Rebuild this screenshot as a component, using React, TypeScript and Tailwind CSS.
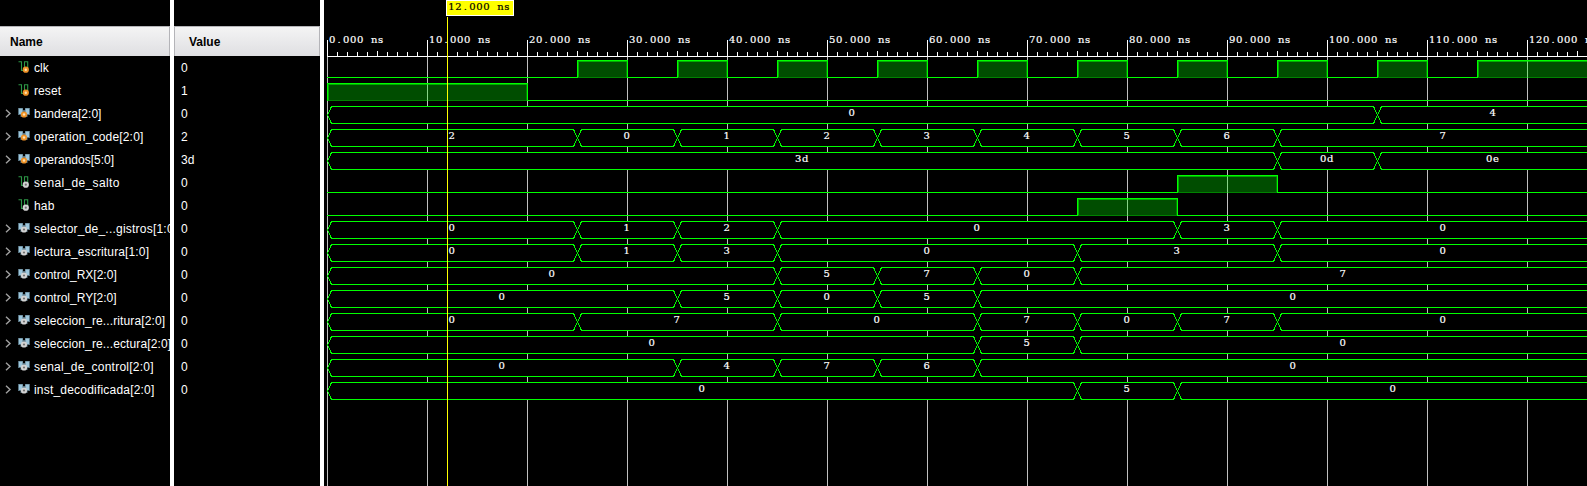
import React from "react";

type Signal = {
  name: string;
  value: string;
  tracking?: string;
  input?: boolean;
  // Scalar signals list their high intervals, buses list [end time, label] segments (ns).
  high?: [number, number][];
  bus?: [number, string][];
};

const END = 128;

const signals: Signal[] = [
  {
    name: "clk", value: "0", input: true,
    high: [[25, 30], [35, 40], [45, 50], [55, 60], [65, 70], [75, 80], [85, 90], [95, 100], [105, 110], [115, END]],
  },
  { name: "reset", value: "1", input: true, tracking: "tracking-[0.1px]", high: [[0, 20]] },
  { name: "bandera[2:0]", value: "0", input: true, bus: [[105, "0"], [END, "4"]] },
  {
    name: "operation_code[2:0]", value: "2", input: true, tracking: "tracking-[0.18px]",
    bus: [[25, "2"], [35, "0"], [45, "1"], [55, "2"], [65, "3"], [75, "4"], [85, "5"], [95, "6"], [END, "7"]],
  },
  { name: "operandos[5:0]", value: "3d", input: true, bus: [[95, "3d"], [105, "0d"], [END, "0e"]] },
  { name: "senal_de_salto", value: "0", tracking: "tracking-[0.36px]", high: [[85, 95]] },
  { name: "hab", value: "0", tracking: "tracking-[0.2px]", high: [[75, 85]] },
  {
    name: "selector_de_...gistros[1:0]", value: "0", tracking: "tracking-[0.22px]",
    bus: [[25, "0"], [35, "1"], [45, "2"], [85, "0"], [95, "3"], [END, "0"]],
  },
  {
    name: "lectura_escritura[1:0]", value: "0", tracking: "tracking-[0.14px]",
    bus: [[25, "0"], [35, "1"], [45, "3"], [75, "0"], [95, "3"], [END, "0"]],
  },
  { name: "control_RX[2:0]", value: "0", bus: [[45, "0"], [55, "5"], [65, "7"], [75, "0"], [END, "7"]] },
  { name: "control_RY[2:0]", value: "0", bus: [[35, "0"], [45, "5"], [55, "0"], [65, "5"], [END, "0"]] },
  {
    name: "seleccion_re...ritura[2:0]", value: "0", tracking: "tracking-[0.12px]",
    bus: [[25, "0"], [45, "7"], [65, "0"], [75, "7"], [85, "0"], [95, "7"], [END, "0"]],
  },
  {
    name: "seleccion_re...ectura[2:0]", value: "0", tracking: "tracking-[0.12px]",
    bus: [[65, "0"], [75, "5"], [END, "0"]],
  },
  {
    name: "senal_de_control[2:0]", value: "0", tracking: "tracking-[0.24px]",
    bus: [[35, "0"], [45, "4"], [55, "7"], [65, "6"], [END, "0"]],
  },
  { name: "inst_decodificada[2:0]", value: "0", tracking: "tracking-[0.2px]", bus: [[75, "0"], [85, "5"], [END, "0"]] },
];

const X0 = 3;
const tx = (ns: number) => X0 + ns * 10;
const rowTop = (i: number) => 60 + i * 23;
const majors = Array.from({ length: 13 }, (_, i) => i * 10);
const minors = Array.from({ length: 127 }, (_, i) => i);

function Dot({ x, y, input }: { x: number; y: number; input?: boolean }) {
  return input ? (
    <>
      <circle cx={x} cy={y} r="3.1" fill="#ef9226" />
      <circle cx={x} cy={y} r="1.2" fill="#ffe0b0" />
    </>
  ) : (
    <>
      <circle cx={x} cy={y} r="3.1" fill="#d2d2d2" />
      <circle cx={x} cy={y} r="1.1" fill="#707070" />
    </>
  );
}

function ScalarIcon({ input }: { input?: boolean }) {
  return (
    <svg width="12" height="13" viewBox="0 0 12 13" className="block shrink-0">
      <path d="M0.5 0.7H3.5V9.5H6.5V0.7H9.7V7" fill="none" stroke="#2c9646" strokeWidth="1.1" />
      <Dot x={7.8} y={8.7} input={input} />
    </svg>
  );
}

function BusIcon({ input }: { input?: boolean }) {
  return (
    <svg width="12" height="13" viewBox="0 0 12 13" className="block shrink-0">
      <path d="M0 1H5V3H7V1H12V8H9.5V10H2.5V8H0Z" fill="#55707e" />
      <path d="M1 1.5H4.5V6L3 7H1ZM7.5 1.5H11V7H9L7.5 6Z" fill="#9cc6dc" />
      <Dot x={6} y={7.5} input={input} />
    </svg>
  );
}

function MonoText({ x, y, children, fill = "#fff" }: { x: number; y: number; children: string; fill?: string }) {
  const xs = children.split("").map((c, i) => x + i * 7 + (c === "." ? 1.5 : 0));
  return (
    <text x={xs.join(" ")} y={y} fill={fill} stroke={fill} strokeWidth="0.2" fontSize="10" fontFamily="'DejaVu Serif', serif">
      {children}
    </text>
  );
}

function Pulse({ a, b, y }: { a: number; b: number; y: number }) {
  const w = b - a;
  return (
    <g>
      <rect x={a} y={y} width={w + 1} height="18" fill="#00ff00" fillOpacity="0.3" />
      <rect x={a + 1.5} y={y + 1.5} width={w - 2} height="16" fill="none" stroke="#00ff00" strokeOpacity="0.3" />
      <path d={`M${a + 1.5} ${y + 17}V${y + 1.5}H${b}`} fill="none" stroke="#00ff00" strokeOpacity="0.35" />
      <path d={`M${a + 0.5} ${y + 18}V${y + 0.5}H${b + 0.5}V${y + 18}`} fill="none" stroke="#00ff00" />
    </g>
  );
}

function ScalarWave({ high, y }: { high: [number, number][]; y: number }) {
  const lows: [number, number][] = [];
  let t = 0;
  for (const [a, b] of high) {
    if (a > t) lows.push([t, a]);
    t = b;
  }
  if (t < END) lows.push([t, END]);
  return (
    <g shapeRendering="crispEdges">
      {high.map(([a, b]) => <Pulse key={a} a={tx(a)} b={tx(b)} y={y} />)}
      {lows.map(([a, b]) => <path key={a} d={`M${tx(a)} ${y + 17.5}H${tx(b) + 1}`} stroke="#00ff00" />)}
    </g>
  );
}

function BusWave({ bus, y }: { bus: [number, string][]; y: number }) {
  return (
    <g>
      {bus.map(([end, label], i) => {
        const start = i ? bus[i - 1][0] : 0;
        const a = tx(start) + 0.5;
        const b = tx(end) + 0.5;
        const t = y + 0.5;
        const m = y + 9;
        const l = y + 17.5;
        const center = (tx(start) + (end === END ? 1285 : tx(end))) / 2;
        return (
          <g key={end}>
            <path
              d={`M${a} ${m}L${a + 4} ${t}H${b - 4}L${b} ${m}L${b - 4} ${l}H${a + 4}Z`}
              fill="#000" stroke="#00ff00" shapeRendering="crispEdges"
            />
            <MonoText x={center - label.length * 3.5} y={y + 10}>{label}</MonoText>
          </g>
        );
      })}
    </g>
  );
}

function Waveform() {
  return (
    <svg width="1263" height="486" viewBox="0 0 1263 486" className="block">
      <g shapeRendering="crispEdges">
        {majors.map((t) => <path key={t} d={`M${tx(t) + 0.5} 57V486`} stroke="#c0c0c0" />)}
        {minors.map((t) => (
          <path key={t} d={`M${tx(t) + 0.5} ${t % 10 === 0 ? 40 : t % 5 === 0 ? 51 : 52}V56`} stroke="#fff" />
        ))}
        <path d="M3 56.5H1263" stroke="#fff" />
      </g>
      {majors.map((t) => <MonoText key={t} x={tx(t) + 2} y={43}>{`${t}.000 ns`}</MonoText>)}
      {signals.map((s, i) =>
        s.high ? <ScalarWave key={s.name} high={s.high} y={rowTop(i)} /> : <BusWave key={s.name} bus={s.bus!} y={rowTop(i)} />
      )}
      <g shapeRendering="crispEdges">
        <path d="M123.5 17V486" stroke="#ffff00" />
        <rect x="122.5" y="0.5" width="67" height="15" fill="#ffff00" stroke="#fff" />
      </g>
      <MonoText x={124.2} y={9.5} fill="#000">12.000 ns</MonoText>
    </svg>
  );
}

function Header({ children, className }: { children: string; className: string }) {
  return (
    <div className={`mt-[26px] flex h-[30px] shrink-0 items-center border-t border-r border-[#b4b4b8] bg-linear-to-b from-[#f4f4f4] to-[#dfdfe2] text-[12px] font-bold text-black ${className}`}>
      {children}
    </div>
  );
}

export default function App() {
  return (
    <div className="flex h-[486px] w-[1587px] overflow-hidden bg-black font-['Liberation_Sans',sans-serif] text-[12px] text-white">
      <div className="flex w-[170px] shrink-0 flex-col overflow-hidden">
        <Header className="pl-[10px]">Name</Header>
        {signals.map((s) => (
          <div key={s.name} className="flex h-[23px] shrink-0 items-center whitespace-nowrap">
            <div className="w-[18px] shrink-0 pl-[5px]">
              {s.bus && (
                <svg width="7" height="9" viewBox="0 0 7 9" className="block">
                  <path d="M1 0.8L5 4.5L1 8.2" fill="none" stroke="#a0a0a0" strokeWidth="1.4" />
                </svg>
              )}
            </div>
            {s.bus ? <BusIcon input={s.input} /> : <ScalarIcon input={s.input} />}
            <span className={`pl-[4px] ${s.tracking ?? ""}`}>{s.name}</span>
          </div>
        ))}
      </div>
      <div className="w-[4px] shrink-0 bg-white" />
      <div className="flex w-[146px] shrink-0 flex-col">
        <Header className="border-l pl-[14px]">Value</Header>
        {signals.map((s) => (
          <div key={s.name} className="flex h-[23px] shrink-0 items-center pl-[7px]">{s.value}</div>
        ))}
      </div>
      <div className="w-[4px] shrink-0 bg-white" />
      <Waveform />
    </div>
  );
}
